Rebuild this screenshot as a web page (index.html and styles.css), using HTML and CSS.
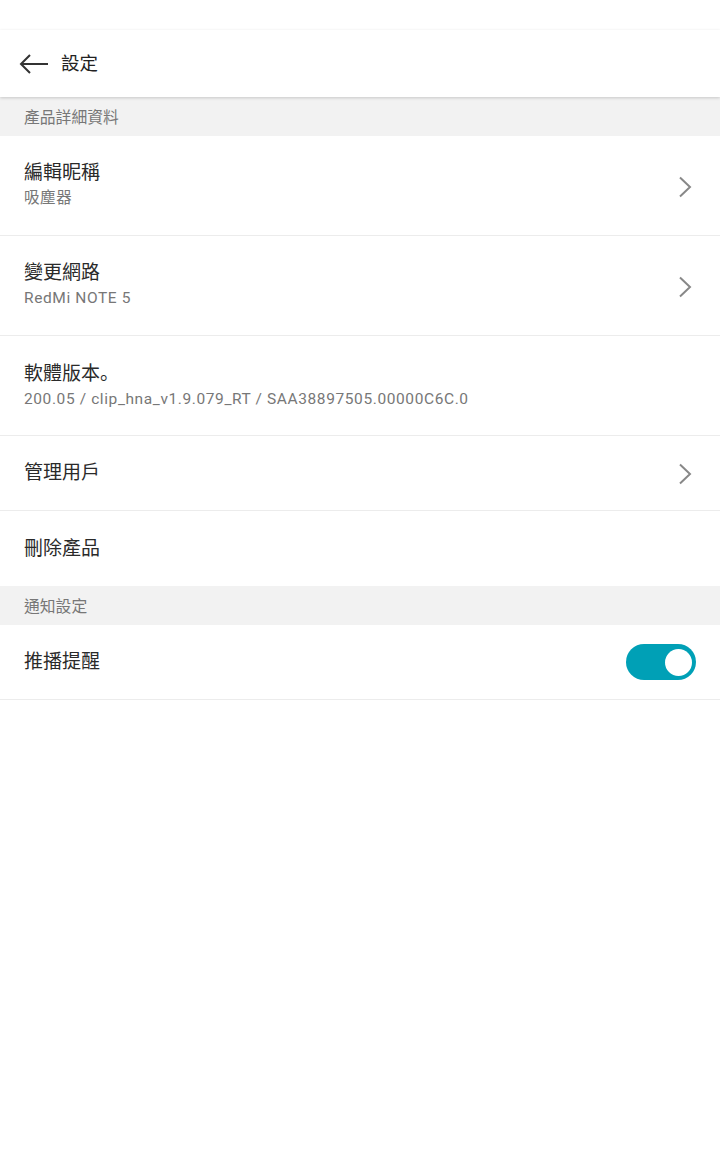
FILE: index.html
```html
<!DOCTYPE html>
<html lang="zh-Hant">
<head>
<meta charset="utf-8">
<title>設定</title>
<link rel="stylesheet" href="styles.css">
</head>
<body>
<div class="status"></div>
<header class="appbar">
  <svg class="back" width="30" height="20" viewBox="0 0 30 20"><path d="M29 10H2M11 1L2 10l9 9" fill="none" stroke="#333" stroke-width="2"/></svg>
  <span class="title">設定</span>
</header>
<div class="section">產品詳細資料</div>
<div class="row two">
  <div class="text"><div class="main">編輯昵稱</div><div class="sub">吸塵器</div></div>
  <svg class="chev" width="14" height="22" viewBox="0 0 14 22"><path d="M2 1.5l10 9.5-10 9.5" fill="none" stroke="#888" stroke-width="2"/></svg>
</div>
<div class="row two">
  <div class="text"><div class="main">變更網路</div><div class="sub">RedMi NOTE 5</div></div>
  <svg class="chev" width="14" height="22" viewBox="0 0 14 22"><path d="M2 1.5l10 9.5-10 9.5" fill="none" stroke="#888" stroke-width="2"/></svg>
</div>
<div class="row two">
  <div class="text"><div class="main">軟體版本<span class="stop" lang="zh-Hans">。</span></div><div class="sub">200.05 / clip_hna_v1.9.079_RT / SAA38897505.00000C6C.0</div></div>
</div>
<div class="row one">
  <div class="text"><div class="main">管理用戶</div></div>
  <svg class="chev" width="14" height="22" viewBox="0 0 14 22"><path d="M2 1.5l10 9.5-10 9.5" fill="none" stroke="#888" stroke-width="2"/></svg>
</div>
<div class="row one last">
  <div class="text"><div class="main">刪除產品</div></div>
</div>
<div class="section">通知設定</div>
<div class="row one">
  <div class="text"><div class="main">推播提醒</div></div>
  <div class="toggle"><div class="knob"></div></div>
</div>
</body>
</html>
```
FILE: styles.css
```css
html, body { margin: 0; padding: 0; background: #fff; }
body {
  font-family: Roboto, "Noto Sans CJK TC", sans-serif;
  color: #333;
  width: 720px;
}
.status { height: 30px; background: #fff; }
.appbar {
  height: 67px;
  box-sizing: border-box;
  padding: 0 0 4px 19px;
  display: flex;
  align-items: center;
  background: #fff;
  box-shadow: 0 1px 3px rgba(0,0,0,0.18);
  position: relative;
  z-index: 1;
}
.back { margin-right: 12px; margin-top: 4px; }
.title { font-size: 18.5px; color: #222; }
.section {
  height: 39px;
  background: #f2f2f2;
  display: flex;
  align-items: center;
  padding-left: 24px;
  font-size: 15.8px;
  color: #777;
}
.row {
  display: flex;
  align-items: center;
  justify-content: space-between;
  padding: 0 28px 0 24px;
  border-bottom: 1px solid #ececec;
  background: #fff;
}
.row.two { height: 99px; }
.row.one { height: 74px; }
.row.last { border-bottom: none; height: 75px; }
.main { font-size: 19px; color: #2a2a2a; line-height: 26px; margin-top: -3px; }
.row.one .main { margin-top: 0; }
.stop { font-family: "Noto Sans CJK SC", sans-serif; }
.sub { font-size: 15.5px; letter-spacing: 0.6px; color: #777; line-height: 20px; margin-top: 2px; }
.chev { margin-top: 2px; }
.toggle {
  width: 70px;
  height: 36px;
  border-radius: 18px;
  background: #00a0b6;
  position: relative;
  margin-right: -4px;
}
.knob {
  position: absolute;
  width: 27px;
  height: 27px;
  border-radius: 50%;
  background: #fff;
  top: 4.5px;
  right: 4px;
}
```
